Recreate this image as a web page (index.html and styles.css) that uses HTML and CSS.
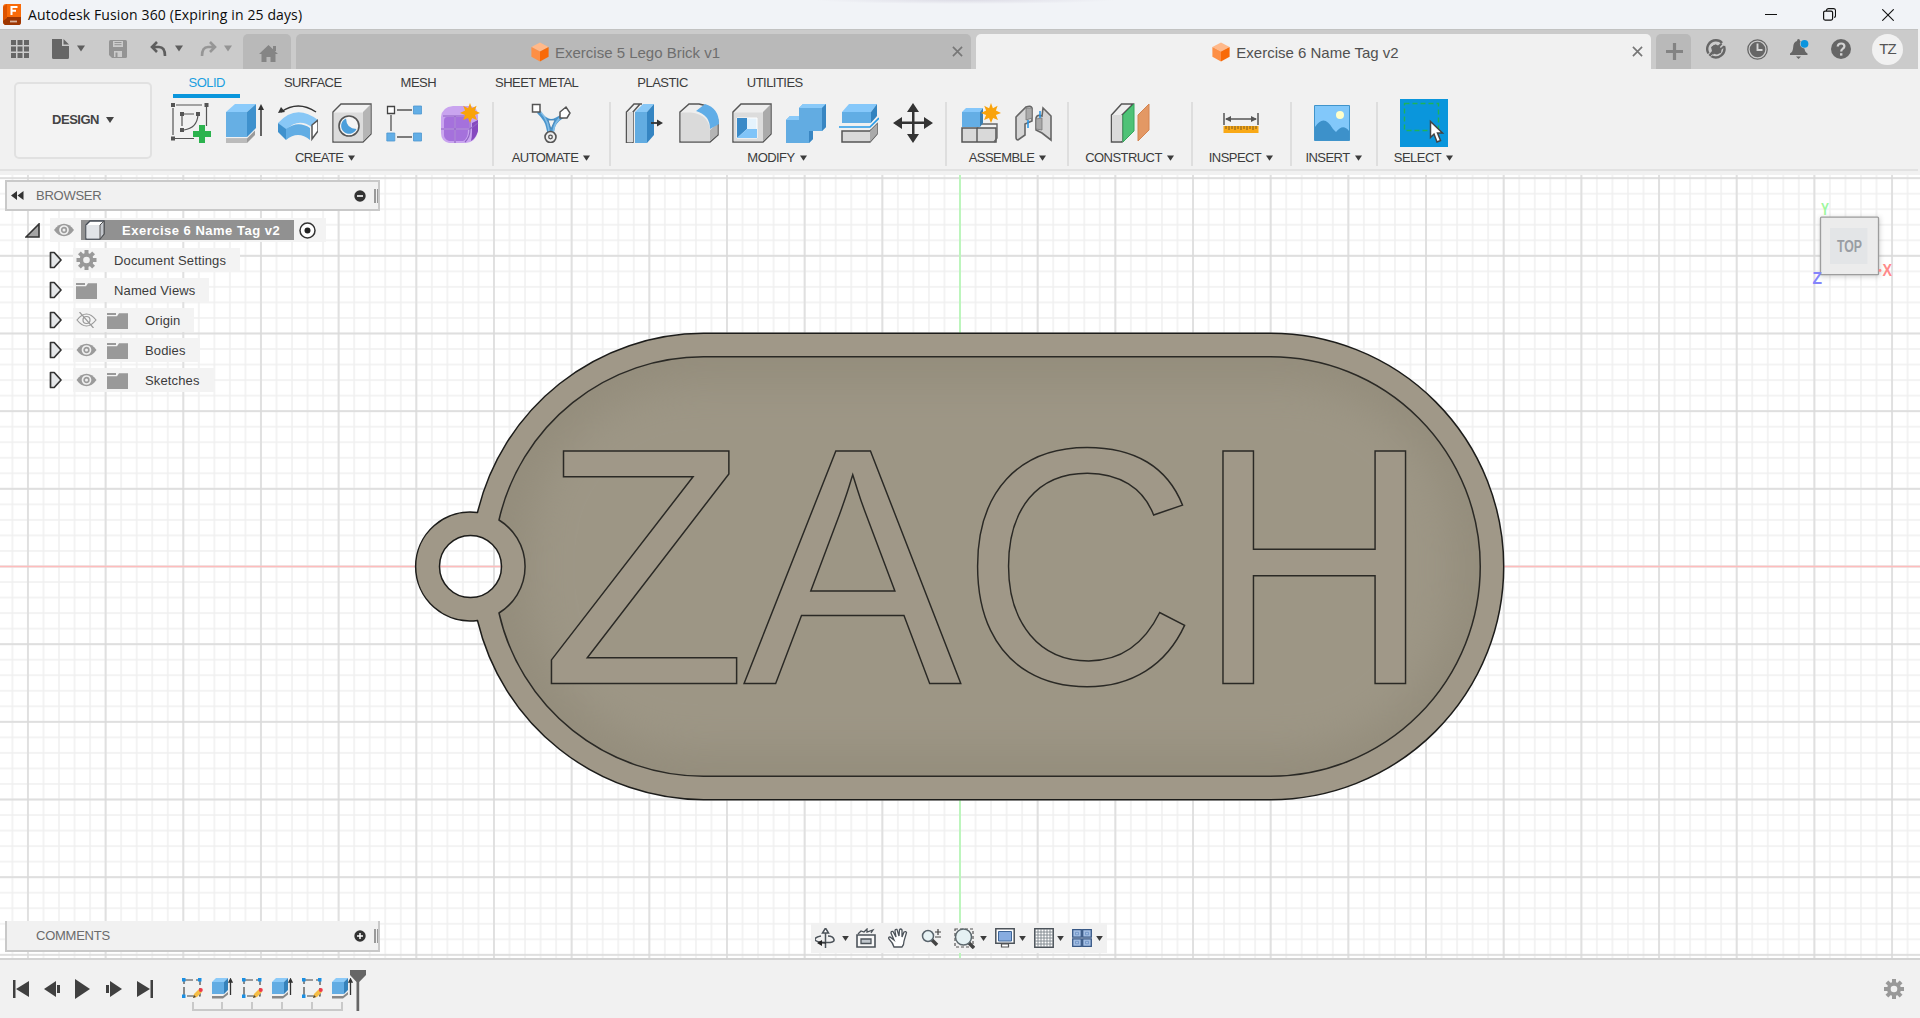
FILE: index.html
```html
<!DOCTYPE html>
<html lang="en">
<head>
<meta charset="utf-8">
<title>Autodesk Fusion 360</title>
<link rel="stylesheet" href="styles.css">
</head>
<body>
<svg class="defs" width="0" height="0" aria-hidden="true">
  <symbol id="caret" viewBox="0 0 8 6"><path d="M0 0h8L4 6z" fill="currentColor"/></symbol>
  <symbol id="cube-orange" viewBox="0 0 18 20"><path d="M9 .5l8.6 4.6L9 9.6.4 5.1z" fill="#ffb98a"/><path d="M.4 5.1L9 9.6v9.9L.4 14.8z" fill="#fd8f45"/><path d="M17.6 5.1L9 9.6v9.9l8.6-4.7z" fill="#f86a08"/></symbol>
  <symbol id="close" viewBox="0 0 12 12"><path d="M1 1l10 10M11 1L1 11" stroke="currentColor" stroke-width="1.8"/></symbol>
  <symbol id="star" viewBox="0 0 20 20"><path d="M10 0l1.9 5.2L16.6 2.8l-1.7 4.7L20 10l-5.1 2.1 2.1 4.9-4.9-2L10 20l-2-5-4.9 2 2-4.900L0 10l5.100-2.500L3.200 2.800 8.100 5.200z" fill="#f9a30b"/></symbol>
  <symbol id="eye" viewBox="0 0 20 14"><path d="M0 7Q4.500.8 10 .8T20 7q-4.500 6.200-10 6.200T0 7z" fill="#9b9b9b"/><circle cx="10" cy="7" r="4" fill="none" stroke="#efefef" stroke-width="1.700"/><circle cx="10" cy="7" r="1.500" fill="#efefef"/></symbol>
  <symbol id="folder" viewBox="0 0 21 17"><path d="M0 1h9v2H0z M0 4.300h10l2-3h9V17H0z" fill="#999"/></symbol>
  <symbol id="expander" viewBox="0 0 14 18"><path d="M1.500 1.500h3.700L12 9l-6.800 7.500H1.500z" fill="#e4e6e8" stroke="#333" stroke-width="1.700" stroke-linejoin="round"/></symbol>
  <symbol id="gear" viewBox="0 0 20 20"><g fill="#999"><circle cx="10" cy="10" r="7"/><path d="M8 0h4v20H8z"/><path d="M8 0h4v20H8z" transform="rotate(45 10 10)"/><path d="M8 0h4v20H8z" transform="rotate(90 10 10)"/><path d="M8 0h4v20H8z" transform="rotate(135 10 10)"/></g><circle cx="10" cy="10" r="3.300" fill="#f1f1f1"/></symbol>
  <symbol id="tl-sketch" viewBox="0 0 21 21"><path d="M2 2h16v16H2z" fill="none" stroke="#444" stroke-width="1.200" stroke-dasharray="9 3"/><g fill="#1a8fe3"><path d="M0 0h3.500v3.500H0zM16 0h3.500v3.500H16zM0 16.500h3.500V20H0z"/></g><path d="M11 20l1-4 5-5 3 3-5 5z" fill="#f6bd45"/><path d="M11 20l1-3 2 2z" fill="#444"/><circle cx="18.800" cy="12" r="2" fill="#ee3c48"/></symbol>
  <symbol id="tl-extrude" viewBox="0 0 21 21"><path d="M0 18h11l5-4v2.500l-5 4H0z" fill="#888"/><path d="M0 4l4-4h12l-4 4z" fill="#8ccaf8"/><path d="M0 4h12v12H0z" fill="#62ace3"/><path d="M12 4l4-4v12l-4 4z" fill="#3582bb"/><path d="M18.500 3v14M17 4l1.500-3L20 4z" stroke="#333" stroke-width="1.300" fill="#333"/></symbol>
</svg>

<header class="titlebar">
  <svg class="app-logo" width="18" height="21" viewBox="0 0 18 21"><path d="M3 0h15v18q0 2-2 3H2q-2-1-2-3V3q0-3 3-3z" fill="#f96a08"/><path d="M0 15l4-2h14v5q0 3-2 3H2q-2-1-2-3z" fill="#9d3602"/><path d="M0 3l4-3v14l-4 3z" fill="#dd5300"/><path d="M7.500 3h7M8.500 3v8M8 6.700h5" stroke="#fff" stroke-width="2" fill="none"/><path d="M7 17.500h7" stroke="#d9b29c" stroke-width="1.800"/></svg>
  <h1 class="app-title">Autodesk Fusion 360 (Expiring in 25 days)</h1>
  <div class="window-controls">
    <svg width="12" height="12" viewBox="0 0 12 12"><path d="M0 5.500h12" stroke="#111"/></svg>
    <svg width="13" height="13" viewBox="0 0 13 13"><path d="M3.500 3V2Q4 .6 5.500.6h5q2 0 2 2v5q0 1.500-1.300 2" fill="none" stroke="#111" stroke-width="1.100"/><rect x=".6" y="3.100" width="9" height="9" rx="1.500" fill="none" stroke="#111" stroke-width="1.200"/></svg>
    <svg width="12" height="12" viewBox="0 0 12 12"><path d="M.3.3l11.400 11.400M11.700.3L.3 11.700" stroke="#111" stroke-width="1.100"/></svg>
  </div>
</header>

<nav class="tabstrip">
  <div class="quick">
    <svg width="18" height="18" viewBox="0 0 18 18" fill="#666"><path d="M0 0h5v5H0zM6.500 0h5v5h-5zM13 0h5v5h-5zM0 6.500h5v5H0zM6.500 6.500h5v5h-5zM13 6.500h5v5h-5zM0 13h5v5H0zM6.500 13h5v5h-5zM13 13h5v5h-5z"/></svg>
    <svg width="17" height="20" viewBox="0 0 17 20" fill="#666"><path d="M0 0h10v7h7v11.500q0 1.500-1.500 1.500h-14Q0 20 0 18.500z"/><path d="M11.500 0L17 5.500h-5.500z"/></svg>
    <svg class="dark" width="8" height="7"><use href="#caret"/></svg>
    <svg width="18" height="18" viewBox="0 0 18 18"><path d="M1.500 0h15Q18 0 18 1.500v15q0 1.500-1.500 1.500H3l-3-3V1.500Q0 0 1.500 0z" fill="#949494"/><path d="M4 1h10v6H4zM5 11h8v6H5z" fill="#cbcbcb"/><path d="M5.500 2.500h7M5.500 4.700h7" stroke="#949494"/><path d="M6.500 12.500h2V17h-2z" fill="#949494"/></svg>
    <svg width="17" height="17" viewBox="0 0 17 17" fill="none" stroke="#5e5e5e" stroke-width="2.600"><path d="M7 1L2 6l5 5M2 6h7q6 0 6 9"/></svg>
    <svg class="dark" width="8" height="7"><use href="#caret"/></svg>
    <svg width="17" height="17" viewBox="0 0 17 17" fill="none" stroke="#969696" stroke-width="2.600"><path d="M10 1l5 5-5 5M15 6H8Q2 6 2 15"/></svg>
    <svg class="faded" width="8" height="7"><use href="#caret"/></svg>
  </div>
  <div class="home"><svg width="19" height="17" viewBox="0 0 19 17" fill="#858585"><path d="M9.500 0L19 9h-2.500v8h-5v-5h-4v5h-5V9H0z"/><path d="M14 1h3v5h-3z"/></svg></div>
  <div class="tab">
    <span class="tab-title"><svg width="18" height="20"><use href="#cube-orange"/></svg>Exercise 5 Lego Brick v1</span>
    <span class="tab-close"><svg width="11" height="11"><use href="#close"/></svg></span>
  </div>
  <div class="tab active">
    <span class="tab-title"><svg width="18" height="20"><use href="#cube-orange"/></svg>Exercise 6 Name Tag v2</span>
    <span class="tab-close"><svg width="11" height="11"><use href="#close"/></svg></span>
  </div>
  <div class="newtab"><svg width="17" height="17" viewBox="0 0 17 17"><path d="M8.500 0v17M0 8.500h17" stroke="#838383" stroke-width="3.200"/></svg></div>
  <div class="account">
    <svg width="20" height="20" viewBox="0 0 20 20"><path d="M2.500 14.500A8.700 8.700 0 0 1 10 1.300Q14 1.300 16 4" fill="none" stroke="#666" stroke-width="2.400"/><path d="M18 7A8.700 8.700 0 0 1 5 17" fill="none" stroke="#666" stroke-width="2.400"/><path d="M2.500 16l3.500-4-1-4 4-3 3 1.500L15 4l1.300 1.200L13.800 8l1 1 2.700-2.500 1.200 1.200-3.200 3-.5 3-4 1.800-3-.8-3 3.300z" fill="#666"/><path d="M5.500 7.500q1.500-2.500 4-2.500M7 15.500l-2.500 2" stroke="#cbcbcb" fill="none"/></svg>
    <svg width="21" height="21" viewBox="0 0 21 21"><circle cx="10.500" cy="10.500" r="9.700" fill="none" stroke="#666" stroke-width="1.300"/><circle cx="10.500" cy="10.500" r="7.800" fill="#666"/><path d="M10.500 4.500v6.500h5" fill="none" stroke="#d5d5d5" stroke-width="1.900"/></svg>
    <svg width="19" height="20" viewBox="0 0 19 20"><path d="M8.500 0q1.500 0 1.500 2 4 1 4.200 6 .3 5 3.300 6.500V16H0v-1.500Q3 13 3.200 8 3.400 3 7 2q0-2 1.500-2zM6 17.500h5l-2.500 2.500z" fill="#666"/><circle cx="14.500" cy="4.800" r="4.600" fill="#cbcbcb"/><circle cx="14.500" cy="4.800" r="3.900" fill="#0a94de"/></svg>
    <svg width="20" height="20" viewBox="0 0 20 20"><circle cx="10" cy="10" r="10" fill="#666"/><path d="M6.700 7.500Q7 4.500 10.200 4.500q3.200 0 3.200 2.800 0 1.500-1.700 2.500-1.500 1-1.500 2.800" fill="none" stroke="#d3d3d3" stroke-width="2.200"/><path d="M9 14.200h2.400v2.400H9z" fill="#d3d3d3"/></svg>
    <span class="avatar">TZ</span>
  </div>
</nav>

<section class="ribbon">
  <button class="workspace">DESIGN <svg width="8" height="6"><use href="#caret"/></svg></button>
  <div class="ribbon-main">
    <div class="ribbon-tabs"><span class="on">SOLID</span><span>SURFACE</span><span>MESH</span><span>SHEET METAL</span><span>PLASTIC</span><span>UTILITIES</span></div>
    <div class="groups">
      <div class="group create">
        <div class="icons">
          <svg viewBox="0 0 40 40"><path d="M5 2h26M35.500 4v19M2 5v27M4 35.500h19" fill="none" stroke="#555" stroke-width="1.200"/><path d="M13 11h10M11 13v10M13 27Q26 25 27 12" fill="none" stroke="#555" stroke-width="1.200"/><path d="M0 0h4v4H0zM33.500 0h4v4h-4zM0 33.500h4v4H0zM9 9h4v4H9zM25 9h4v4h-4zM9 25h4v4H9z" fill="#555"/><path d="M28 22h6v6h6v6h-6v6h-6v-6h-6v-6h6z" fill="#2cb34e"/></svg>
          <svg viewBox="0 0 40 40"><path d="M1 35.500h21l8-8V32l-8 8H1z" fill="#9a9a9a"/><path d="M1 35.500h21v4.500H1z" fill="#bbb"/><path d="M1 9l9-8h21l-9 8z" fill="#8bcbfb"/><path d="M1 9h21v25H1z" fill="#66afe4"/><path d="M22 9l9-8v24l-9 9z" fill="#3f91cd"/><path d="M36 33V5" stroke="#333" stroke-width="1.500"/><path d="M33 7l3-6 3 6z" fill="#333"/></svg>
          <svg viewBox="0 0 40 40"><path d="M3 9Q20-3 38 9" fill="none" stroke="#333" stroke-width="1.500"/><path d="M0 10l3-6 4 5z" fill="#333"/><path d="M0 20Q18 0 40 17l-6 7Q20 14 8 27z" fill="#88c7f6"/><path d="M0 20l8 6v11l-8-8z" fill="#3f91cd"/><path d="M8 26q12-9 24-1v12Q20 27 8 37z" fill="#62ade4"/><path d="M34 22l6-5v11l-6 8z" fill="#fff" stroke="#555" stroke-width="1.500"/></svg>
          <svg viewBox="0 0 40 40"><path d="M1 9l8-8h30v30l-8 8H1z" fill="#f2f2f2" stroke="#555" stroke-width="1.400"/><path d="M1.700 9.500H31v28.800H1.700z" fill="#dcdcdc"/><path d="M31 9l7.500-7.500v29.300L31 38z" fill="#b5b5b5"/><circle cx="17" cy="23" r="10" fill="#f5f5f5" stroke="#555" stroke-width="1.600"/><path d="M14 15.500a8 8 0 1 0 10.500 10.500q-10 0-10.500-10.500z" fill="#4c9fdb"/></svg>
          <svg viewBox="0 0 40 40"><path d="M11 7h15M5 12v16M11 34h15" fill="none" stroke="#555" stroke-width="1.300"/><path d="M1.500 3.500h7v7h-7z" fill="#fff" stroke="#444" stroke-width="1.300"/><g fill="#62aee6" stroke="#4f98d0" stroke-width=".8"><path d="M27.500 3h8v8h-8zM.8 30h8v8h-8zM27.500 30h8v8h-8z"/></g></svg>
          <svg viewBox="0 0 40 40"><path d="M1 14Q2 4 13 3h17q8 1 8 10v15q-2 11-12 12H9q-8-2-8-10z" fill="#c9a4ef"/><path d="M7 14h7v11H4v-7q0-4 3-4zM16 14h9q4 0 4 4v7H16zM4 27h10v11H9q-5-2-5-6zM16 27h12q0 9-5 11h-7z" fill="#a571dc"/><path d="M32 20l6-3v11q-2 7-7 10 1-4 1-9z" fill="#8549bf"/><path d="M1 26h29l8-6M15 13v27M3 13h22q5 1 5 6v8q0 7-5 12" fill="none" stroke="#8f62c4" stroke-width="1.100"/><use href="#star" x="20" y="0" width="20" height="20"/></svg>
        </div>
        <div class="label">CREATE <svg width="7" height="6"><use href="#caret"/></svg></div>
      </div>
      <div class="group automate">
        <div class="icons"><svg viewBox="0 0 40 40"><path d="M8 8q8 8 12 8t12-6l3 4q-8 3-11 10l-2 9h-5l-2-9q-1-6-9-14z" fill="#4b96cd"/><path d="M17 17h7l-4 9z" fill="#f1f1f1" stroke="#3b7eb3" stroke-width=".8"/><path d="M9 8q10 11 9 25M33 12q-11 6-11 21" fill="none" stroke="#82bce6" stroke-width="1.600"/><path d="M1.500 1.500H9V9H1.500zM29 9l6-5 4 6-3 5h-7z" fill="#fff" stroke="#555" stroke-width="1.500"/><circle cx="19.500" cy="34" r="5.500" fill="#eee" stroke="#555" stroke-width="1.600"/><circle cx="19.500" cy="34" r="1.800" fill="none" stroke="#555" stroke-width="1.300"/></svg></div>
        <div class="label">AUTOMATE <svg width="7" height="6"><use href="#caret"/></svg></div>
      </div>
      <div class="group modify">
        <div class="icons">
          <svg viewBox="0 0 40 40"><path d="M8 40H1.500V9L9 1h8M8 40V9l7-8" fill="#f0f0f0" stroke="#555" stroke-width="1.500"/><path d="M2 9h6v30H2z" fill="#dadada"/><path d="M10 9l8-8h11l-7 8z" fill="#88c8f7"/><path d="M10 9h12v31H10z" fill="#62ace1"/><path d="M22 9l7-8v31l-7 8z" fill="#3585c2"/><path d="M26 20h9" stroke="#333" stroke-width="1.800"/><path d="M32 16.500l6 3.500-6 3.500z" fill="#333"/></svg>
          <svg viewBox="0 0 40 40"><path d="M1 9l9-8h10Q38 4 39 20v12l-8 7H1z" fill="#eee" stroke="#555" stroke-width="1.500"/><path d="M1.700 9.500H12q18 2 19 18v10.800H1.700z" fill="#dadada"/><path d="M31 27l7.500-6.500v11L31 38z" fill="#b4b4b4"/><path d="M17 8l9-7q14 4 14 20l-9 5Q31 12 17 8z" fill="#60ade7"/></svg>
          <svg viewBox="0 0 40 40"><path d="M1 9l8-8h30v30l-8 8H1z" fill="#eee" stroke="#555" stroke-width="1.500"/><path d="M1.700 9.500H31v28.800H1.700z" fill="#dcdcdc"/><path d="M31 9l7.500-7.500v29.300L31 38z" fill="#aaa"/><path d="M5 15h20v20H5z" fill="#e5f3fd" stroke="#fff"/><path d="M5 15h10v11L5 35z" fill="#3a8ac8"/><path d="M15 26h10v9H5z" fill="#80c4f8"/></svg>
          <svg viewBox="0 0 40 40"><path d="M0 17l4-4h9V5l4-4h23v23l-4 4h-9v8l-4 4H0z" fill="#62ace2"/><path d="M13 5l4-4h23l-4 4zM0 17l4-4h9v4z" fill="#8acaf9"/><path d="M36 5l4-4v23l-4 4zM23 28h4v8l-4 4z" fill="#3986c2"/></svg>
          <svg viewBox="0 0 40 40"><path d="M3 28h28l7-7v10l-7 8H3z" fill="#d9d9d9" stroke="#555" stroke-width="1.500"/><path d="M31 28l7-7v10l-7 8z" fill="#aaa"/><path d="M3 9l7-8h28l-6 8z" fill="#86c8fa"/><path d="M3 9h29v11H3z" fill="#61ade4"/><path d="M32 9l6-8v12l-6 7z" fill="#3383bf"/><path d="M0 24h31l9-9" fill="none" stroke="#f1f1f1" stroke-width="4"/><path d="M0 24h31l9-9" fill="none" stroke="#289be7" stroke-width="1.700"/></svg>
          <svg viewBox="0 0 40 40" fill="#333"><path d="M19 8h2.500v10.500H33V21H21.500v11H19V21H8v-2.500h11z"/><path d="M20 0l6 9H14zM20 40l6-9H14zM0 20l9-6v12zM40 20l-9-6v12z"/></svg>
        </div>
        <div class="label">MODIFY <svg width="7" height="6"><use href="#caret"/></svg></div>
      </div>
      <div class="group assemble">
        <div class="icons">
          <svg viewBox="0 0 40 40"><path d="M1 25h34v14H1z" fill="#d9d9d9" stroke="#555" stroke-width="1.500"/><path d="M16 25l4-4h16v14l-3 4" fill="none" stroke="#666" stroke-width="1.400"/><path d="M16 25v14" stroke="#555" stroke-width="1.400"/><path d="M1 9l4-4h17l-3 4z" fill="#85c7fa"/><path d="M1 9h18v15H1z" fill="#64aee5"/><path d="M19 9l3-4v15l-3 4z" fill="#397fb3"/><use href="#star" x="20" y="0" width="20" height="20"/></svg>
          <svg viewBox="0 0 40 40"><path d="M2 14l10-10q5-2 6 1v13l-7 3v11l-7 5q-2 0-2-3zM37 13L29 5l-1 8q-5-2-6 2v12l6 3 9 7z" fill="#d5d5d5" stroke="#666" stroke-width="1.600"/><path d="M12 5v12l6-2V5zM22 16v10l6 1V15z" fill="#aaa" stroke="#777" stroke-width=".8"/><path d="M14 17v8M26 8v7" stroke="#2294e8" stroke-width="1.500"/></svg>
        </div>
        <div class="label">ASSEMBLE <svg width="7" height="6"><use href="#caret"/></svg></div>
      </div>
      <div class="group construct">
        <div class="icons"><svg viewBox="0 0 40 40"><path d="M1.500 12l10-11H23L12 12v27H1.500z" fill="#eee" stroke="#555" stroke-width="1.500"/><path d="M2 12h10v26H2z" fill="#dadada"/><path d="M13 12L24 1v27L13 39z" fill="#4fc277" stroke="#35a85c"/><path d="M28 12L39 1v26L28 38z" fill="#e39864" stroke="#d48450"/></svg></div>
        <div class="label">CONSTRUCT <svg width="7" height="6"><use href="#caret"/></svg></div>
      </div>
      <div class="group inspect">
        <div class="icons"><svg viewBox="0 0 40 40"><path d="M3 10v12M37 10v12M5 16h30" stroke="#555" stroke-width="1.500"/><path d="M4 16l6-3v6zM36 16l-6-3v6z" fill="#555"/><path d="M2.500 23h35v7h-35z" fill="#f9a916"/><path d="M5 23v3M8 23v4M11 23v3M14 23v4M17 23v3M20 23v4M23 23v3M26 23v4M29 23v3M32 23v4M35 23v3" stroke="#7d5b1f"/></svg></div>
        <div class="label">INSPECT <svg width="7" height="6"><use href="#caret"/></svg></div>
      </div>
      <div class="group insert">
        <div class="icons"><svg viewBox="0 0 40 40"><path d="M2.500 2.500h35v35h-35z" fill="#82c8fa" stroke="#4094cb"/><path d="M3 24q9-14 18 2l3 3q7-9 13-1v9H3z" fill="#3d91ca"/><circle cx="28" cy="12" r="4" fill="#ffffc9"/></svg></div>
        <div class="label">INSERT <svg width="7" height="6"><use href="#caret"/></svg></div>
      </div>
      <div class="group select">
        <div class="icons"><svg viewBox="0 0 48 48"><path d="M0 0h48v48H0z" fill="#0a96dc"/><path d="M4.500 4.500h34v27h-34z" fill="none" stroke="#1eb25a" stroke-width="1.400" stroke-dasharray="5 3"/><path d="M30.500 22.500v16l3.500-3.500 3 8 3.500-1.500-3-7.500h5z" fill="#fff" stroke="#444" stroke-width="1.500"/></svg></div>
        <div class="label">SELECT <svg width="7" height="6"><use href="#caret"/></svg></div>
      </div>
    </div>
  </div>
</section>

<main class="canvas">
  <svg class="scene" viewBox="0 175 1920 783" width="1920" height="783">
    <defs>
      <pattern id="minor" x="952.230" y="558.730" width="15.534" height="15.534" patternUnits="userSpaceOnUse"><path d="M7.767 0v15.540M0 7.767h15.540" stroke="#efefef" stroke-width="1.400"/></pattern>
      <pattern id="major" x="921.165" y="527.665" width="77.670" height="77.670" patternUnits="userSpaceOnUse"><path d="M38.835 0v77.700M0 38.835h77.700" stroke="#d9d9d9" stroke-width="1.400"/></pattern>
      <clipPath id="pocket"><path d="M703.500 356.750H1270.500A209.750 209.750 0 0 1 1270.500 776.250H703.500A209.750 209.750 0 0 1 499 613A54.500 54.500 0 0 0 499 520A209.750 209.750 0 0 1 703.500 356.750Z"/></clipPath>
      <filter id="soft" x="-20%" y="-20%" width="140%" height="140%"><feGaussianBlur stdDeviation="20"/></filter>
      <filter id="halo" x="-20%" y="-20%" width="140%" height="140%"><feGaussianBlur stdDeviation="2.500"/></filter>
    </defs>
    <rect x="0" y="175" width="1920" height="783" fill="#fff"/>
    <rect x="0" y="175" width="1920" height="783" fill="url(#minor)"/>
    <rect x="0" y="175" width="1920" height="783" fill="url(#major)"/>
    <path d="M0 566.500H1920" stroke="#ffbcbc" stroke-width="1.600"/>
    <path d="M960 175V958" stroke="#b9f8b9" stroke-width="1.800"/>
    <path d="M703.500 333.300H1270.500A233.200 233.200 0 0 1 1270.500 799.700H703.500A233.200 233.200 0 0 1 477.500 620.500A54.500 54.500 0 1 1 477.500 512.500A233.200 233.200 0 0 1 703.500 333.300ZM501.500 566.500a31 31 0 1 0-62 0a31 31 0 1 0 62 0Z" fill="#a09888" fill-rule="evenodd" stroke="#1c1c1a" stroke-width="1.500"/>
    <g clip-path="url(#pocket)">
      <rect x="480" y="350" width="1020" height="440" fill="#948d7c"/>
      <rect x="530" y="384" width="922" height="366" rx="165" fill="#9d9685" filter="url(#soft)"/>
    </g>
    <path d="M703.500 356.750H1270.500A209.750 209.750 0 0 1 1270.500 776.250H703.500A209.750 209.750 0 0 1 499 613A54.500 54.500 0 0 0 499 520A209.750 209.750 0 0 1 703.500 356.750Z" fill="none" stroke="#2a2925" stroke-width="1.500"/>
    <text class="engraving" transform="scale(.967 1)" y="683.500"><tspan x="559.200" textLength="213.500" lengthAdjust="spacingAndGlyphs">Z</tspan><tspan x="768.800 993.800 1237">ACH</tspan></text>
  </svg>

  <aside class="browser">
    <div class="panel-head">
      <svg width="13" height="9" viewBox="0 0 13 9"><path d="M6 0v9L0 4.500zM12.500 0v9l-6-4.500z" fill="#333"/></svg>
      <span class="panel-title">BROWSER</span>
      <svg width="12" height="12" viewBox="0 0 12 12"><circle cx="6" cy="6" r="5.700" fill="#333"/><path d="M3 6h6" stroke="#fff" stroke-width="1.600"/></svg>
      <i class="grip"></i>
    </div>
    <div class="row root">
      <svg width="15" height="15" viewBox="0 0 15 15"><path d="M1 14L14 1v13z" fill="#a5a5a5" stroke="#333" stroke-width="1.600"/></svg>
      <div class="cell">
        <svg width="20" height="14"><use href="#eye"/></svg>
        <span class="selected"><svg width="20" height="20" viewBox="0 0 20 20"><path d="M1 5l4-4h14v13l-4 5H1z" fill="#fff" stroke="#444b55" stroke-width="1.300"/><path d="M1.500 5H15v13.500H1.500z" fill="#e1e4e8"/><path d="M15 5l4-4v13l-4 5z" fill="#c2c6cc" stroke="#555"/></svg><b>Exercise 6 Name Tag v2</b></span>
        <svg width="17" height="17" viewBox="0 0 17 17"><circle cx="8.500" cy="8.500" r="7.500" fill="#fff" stroke="#333" stroke-width="1.500"/><circle cx="8.500" cy="8.500" r="3" fill="#222"/></svg>
      </div>
    </div>
    <div class="row"><svg width="14" height="18"><use href="#expander"/></svg><div class="cell"><svg width="21" height="20"><use href="#gear"/></svg><span class="name">Document Settings</span></div></div>
    <div class="row"><svg width="14" height="18"><use href="#expander"/></svg><div class="cell"><svg width="21" height="17"><use href="#folder"/></svg><span class="name">Named Views</span></div></div>
    <div class="row"><svg width="14" height="18"><use href="#expander"/></svg><div class="cell"><svg width="21" height="16" viewBox="0 0 20 16" fill="none" stroke="#999" stroke-width="1.200"><path d="M.5 8Q10-4 19.500 8 10 20 .5 8zM3 0l14 16"/><circle cx="10" cy="8" r="3.500"/></svg><svg class="fold" width="21" height="17"><use href="#folder"/></svg><span class="name">Origin</span></div></div>
    <div class="row"><svg width="14" height="18"><use href="#expander"/></svg><div class="cell"><svg width="21" height="14"><use href="#eye"/></svg><svg class="fold" width="21" height="17"><use href="#folder"/></svg><span class="name">Bodies</span></div></div>
    <div class="row"><svg width="14" height="18"><use href="#expander"/></svg><div class="cell"><svg width="21" height="14"><use href="#eye"/></svg><svg class="fold" width="21" height="17"><use href="#folder"/></svg><span class="name">Sketches</span></div></div>
  </aside>

  <svg class="viewcube" width="100" height="100" viewBox="1800 190 100 100">
    <rect x="1820" y="217" width="60" height="60" fill="#777" opacity=".3" filter="url(#halo)"/>
    <rect x="1820.500" y="217.200" width="58" height="57.500" rx="1" fill="#ececec" stroke="#9d9d9d" stroke-width="1.300"/>
    <rect x="1830" y="228" width="37.500" height="36" fill="#e3e5e7"/>
    <text class="cube-label" x="1837" y="251.500" textLength="25" lengthAdjust="spacingAndGlyphs">TOP</text>
    <text class="axis y" x="1821" y="214.500" textLength="8" lengthAdjust="spacingAndGlyphs">Y</text>
    <text class="axis x" x="1882.500" y="276" textLength="9.500" lengthAdjust="spacingAndGlyphs">X</text>
    <text class="axis z" x="1812.500" y="283.500" textLength="9.500" lengthAdjust="spacingAndGlyphs">Z</text>
    <circle cx="1880" cy="270.500" r="1.400" fill="#ff8888"/>
  </svg>

  <div class="comments panel-head">
    <span class="panel-title">COMMENTS</span>
    <svg width="12" height="12" viewBox="0 0 12 12"><circle cx="6" cy="6" r="5.700" fill="#333"/><path d="M3 6h6M6 3v6" stroke="#fff" stroke-width="1.500"/></svg>
    <i class="grip"></i>
  </div>

  <div class="navbar">
    <svg width="20" height="20" viewBox="0 0 20 20"><path d="M6 8q-6 1-6 3.500T10 14.500t9-3T13 8" fill="none" stroke="#4c535a" stroke-width="1.500"/><path d="M10.500 5v15M10.500 0l-3 5h6z" fill="#fff" stroke="#4c535a" stroke-width="1.500"/><path d="M2 15l5-3v6zM6 14.500h5v1H6z" fill="#222"/></svg>
    <svg width="7" height="5"><use href="#caret"/></svg>
    <svg width="20" height="20" viewBox="0 0 20 20"><path d="M1 7h18v12H1z" fill="#f8f8f8" stroke="#4c535a" stroke-width="1.600"/><path d="M5 11h10v4.500H5z" fill="#c2c8ce" stroke="#4c535a" stroke-width="1.300"/><path d="M2 6l3-3 3 1 3-3v3l6-2-2 3" fill="none" stroke="#4c535a" stroke-width="1.300"/></svg>
    <svg width="20" height="20" viewBox="0 0 20 20"><path d="M6 19Q5 15 1 11q-1-2 1-2l4 3-3-7q0-2 2-1.500L8 9 7 3q0-2 2-1.500L11 8l.5-6q1-2 2.500 0v7l2-5q2-1 2.500.5L16 13q0 4-2 6z" fill="#fff" stroke="#4c535a" stroke-width="1.300"/></svg>
    <svg width="21" height="20" viewBox="0 0 21 20"><path d="M10 11l6 6" stroke="#444" stroke-width="3.500"/><circle cx="7" cy="8" r="5.500" fill="#e7f2f4" stroke="#59646c" stroke-width="1.500"/><path d="M14 4h6M17 1v6M14 9h6" stroke="#444" stroke-width="1.200"/></svg>
    <svg class="zoom-window" width="21" height="21" viewBox="0 0 21 21"><path d="M1 1h18v18H1z" fill="none" stroke="#555" stroke-width="1.200" stroke-dasharray="3 2"/><path d="M14 14l6 6" stroke="#444" stroke-width="3.500"/><circle cx="9.500" cy="9" r="8" fill="#e5f1f3" stroke="#5d686d" stroke-width="1.500"/></svg>
    <svg width="7" height="5"><use href="#caret"/></svg>
    <svg class="display" width="20" height="20" viewBox="0 0 20 20"><path d="M.8.8h18.400v14.500H.8z" fill="#fff" stroke="#4c535a" stroke-width="1.500"/><path d="M3.500 3.500h13v9.500h-13z" fill="#87ace0" stroke="#3f6698"/><path d="M6.500 16h7v3h-7z" fill="#fff" stroke="#555" stroke-width="1.200"/></svg>
    <svg width="7" height="5"><use href="#caret"/></svg>
    <svg class="gridset" width="20" height="20" viewBox="0 0 20 20"><path d="M.8.800h18.400v18.400H.8z" fill="#fff" stroke="#4c535a" stroke-width="1.500"/><path d="M4 1v18M7 1v18M10 1v18M13 1v18M16 1v18M1 4h18M1 7h18M1 10h18M1 13h18M1 16h18" stroke="#7c838a" stroke-width=".9"/></svg>
    <svg width="7" height="5"><use href="#caret"/></svg>
    <svg class="viewports" width="20" height="18" viewBox="0 0 20 18" fill="#a4bfe4" stroke="#385886" stroke-width="1.300"><path d="M.7.700h8.600v7.500H.7zM10.700.700h8.600v7.500h-8.600zM.7 9.800h8.600v7.500H.7zM10.700 9.800h8.600v7.500h-8.600z"/><path d="M3.500 3.300h3v2.500h-3zM13.500 3.300h3v2.500h-3zM3.500 12.300h3v2.500h-3zM13.500 12.300h3v2.500h-3z" stroke="#6b90c4" stroke-width=".8"/></svg>
    <svg width="7" height="5"><use href="#caret"/></svg>
  </div>
</main>

<footer class="timeline">
  <div class="transport">
    <svg width="16" height="18" viewBox="0 0 16 18" fill="#404040"><path d="M0 0h2.500v18H0zM16 1v16L3 9z"/></svg>
    <svg width="16" height="18" viewBox="0 0 16 18" fill="#404040"><path d="M12 1v16L0 9zM13 5h3v8h-3z"/></svg>
    <svg width="16" height="20" viewBox="0 0 16 20" fill="#404040"><path d="M0 0l15 10L0 20z"/></svg>
    <svg width="16" height="18" viewBox="0 0 16 18" fill="#404040"><path d="M4 1v16l12-8zM0 5h3v8H0z"/></svg>
    <svg width="16" height="18" viewBox="0 0 16 18" fill="#404040"><path d="M13.500 0H16v18h-2.500zM0 1v16l13-8z"/></svg>
  </div>
  <div class="history">
    <div class="features">
      <svg width="21" height="21"><use href="#tl-sketch"/></svg><svg width="21" height="21"><use href="#tl-extrude"/></svg><svg width="21" height="21"><use href="#tl-sketch"/></svg><svg width="21" height="21"><use href="#tl-extrude"/></svg><svg width="21" height="21"><use href="#tl-sketch"/></svg><svg width="21" height="21"><use href="#tl-extrude"/></svg>
    </div>
    <svg class="bracket" width="151" height="9" viewBox="0 0 151 9"><path d="M1 0v8h149V0M30 0v8M60 0v8M90 0v8M120 0v8" fill="none" stroke="#c9c9c9" stroke-width="2"/></svg>
  </div>
  <svg class="marker" width="16" height="41" viewBox="0 0 16 41"><path d="M0 0h16v5L9.200 12v29H6.500V12L0 5z" fill="#666"/></svg>
  <svg class="settings" width="20" height="20"><use href="#gear"/></svg>
</footer>
</body>
</html>
```
FILE: styles.css
```css
* { box-sizing: border-box; }
body { margin: 0; width: 1920px; height: 1018px; overflow: hidden; display: flex; flex-direction: column; background: #f1f1f1; color: #3c3c3c; font: 13px "Liberation Sans", Arial, sans-serif; }
svg { display: block; flex: none; }
.defs { position: absolute; }

.titlebar { height: 29px; flex: none; display: flex; align-items: center; padding: 0 26px 0 3px; background: radial-gradient(ellipse 150px 4px at 965px 0, #dddce6, transparent), #f1f3f7; }
.app-logo { margin-top: -1px; }
.app-title { margin: 0 0 0 7px; font: 400 14px/28px "Open Sans", "Noto Sans", sans-serif; letter-spacing: .12px; color: #0c0c0c; }
.window-controls { margin-left: auto; display: flex; align-items: center; gap: 46px; }

.tabstrip { height: 40px; flex: none; width: 1917.500px; background: #cbcbcb; display: flex; align-items: flex-end; border-top: 1px solid #c2c2c2; }
.quick { width: 243px; height: 40px; display: grid; grid-template-columns: 41px 25px 32px 41px 25px 25px 24px 8px; align-items: center; padding-left: 11px; }
.dark { color: #5e5e5e; margin-top: -2px; }
.faded { color: #949494; margin-top: -2px; }
.home { width: 48px; height: 35px; background: #b9b9b9; border-radius: 5px 5px 0 0; display: flex; align-items: center; justify-content: center; padding: 4px 0 0 3px; margin-right: 5px; }
.tab { width: 675px; height: 35px; background: #b9b9b9; border-radius: 5px 5px 0 0; display: flex; align-items: center; margin-right: 5px; font-size: 15px; color: #6e6e6e; }
.tab.active { background: #f1f1f1; color: #505050; }
.tab-title { flex: 1; display: flex; align-items: center; justify-content: center; gap: 6px; padding: 1px 0 0 11px; }
.tab-close { width: 27px; display: flex; justify-content: center; color: #777; }
.newtab { width: 35px; height: 35px; background: #b9b9b9; border-radius: 5px 5px 0 0; display: flex; align-items: center; justify-content: center; padding-left: 1px; }
.account { margin-left: 15px; height: 40px; display: grid; grid-template-columns: 41px 43px 41px 42px 32px; align-items: center; justify-items: start; }
.avatar { width: 31px; height: 31px; border-radius: 50%; background: #f1f1f1; text-align: center; line-height: 30px; font-size: 15px; letter-spacing: -.8px; color: #555; margin-left: -1px; }

.ribbon { height: 102px; flex: none; width: 1917.500px; display: flex; border-bottom: 2px solid #e2e2e2; letter-spacing: -.55px; }
.workspace { width: 138px; height: 77px; margin: 13px 0 0 14px; border: 2px solid #e1e1e1; border-radius: 5px; background: #f3f3f3; font: bold 13px "Liberation Sans", Arial, sans-serif; color: #444; letter-spacing: -.5px; display: flex; align-items: center; justify-content: center; gap: 7px; padding: 0 0 2px; }
.ribbon-main { flex: 1; }
.ribbon-tabs { display: flex; gap: 28px; height: 29px; margin-left: 21px; line-height: 28px; letter-spacing: -.53px; }
.ribbon-tabs span { padding: 0 15.500px; white-space: nowrap; }
.ribbon-tabs .on { color: #1a9fe0; border-bottom: 4px solid #0a96dc; }
.groups { display: flex; margin-left: 12px; }
.group { height: 64px; margin-top: 4px; border-right: 2px solid #dedede; }
.icons { display: flex; justify-content: space-around; height: 48px; margin-top: -3px; align-items: center; }
.icons svg { width: 40px; height: 40px; }
.label { display: flex; align-items: center; justify-content: center; gap: 5px; line-height: 21px; }
.create { width: 329.500px; padding-right: 5px; }
.automate { width: 117px; }
.modify { width: 336px; padding: 0 5px 0 8px; }
.modify .label { margin-left: -4px; }
.assemble { width: 122px; padding: 0 6px 0 8px; }
.construct { width: 124px; }
.inspect { width: 99px; }
.insert { width: 86px; }
.insert .icons { margin-right: 3px; }
.select { width: 92px; border: 0; }
.select .icons svg { width: 48px; height: 48px; }

.canvas { position: relative; flex: none; height: 783px; margin-top: 4px; overflow: hidden; }
.engraving { font-family: "Liberation Sans", Arial, sans-serif; font-size: 338px; fill: #a09888; stroke: #2a2925; stroke-width: 1.500px; }
.browser { position: absolute; left: 5px; top: 5px; width: 375px; }
.panel-head { display: flex; align-items: center; height: 31px; border: 2px solid #c9c9c9; background: #f1f1f1; padding: 0 0 0 4px; color: #6b6b6b; }
.panel-title { flex: 1; margin-left: 12px; letter-spacing: -.25px; }
.grip { width: 4px; height: 14px; margin-left: 8px; border: solid #999; border-width: 0 1px 0 2px; }
.row { display: flex; align-items: center; height: 24px; margin: 0 0 6px 44px; }
.row.root { margin: 7px 0 6px 20px; }
.cell { height: 24px; background: #f3f3f3; display: flex; align-items: center; padding: 0 14px 0 3px; margin-left: 10px; }
.root .cell { padding: 0 10px 0 4px; }
.selected { display: flex; align-items: center; height: 20px; width: 213px; background: #919191; color: #fff; margin: 0 5px 0 7px; padding-left: 4px; white-space: nowrap; }
.selected b { margin-left: 17px; letter-spacing: .5px; }
.fold { margin-left: 10px; }
.name { margin-left: 17px; letter-spacing: .13px; white-space: nowrap; }
.viewcube { position: absolute; left: 1800px; top: 15px; }
.cube-label { font: bold 16px "Liberation Sans", Arial, sans-serif; fill: #999da3; }
.axis { font: bold 17px "Liberation Sans", Arial, sans-serif; }
.axis.x { fill: #ff8a8a; }
.axis.y { fill: #9df79d; }
.axis.z { fill: #8484fb; }
.comments { position: absolute; left: 5px; top: 746px; width: 375px; border-top: 0; padding-left: 17px; }
.navbar { position: absolute; left: 811px; top: 748px; width: 296px; height: 30px; background: #f1f1f1; display: grid; grid-template-columns: 28px 12px 30px 34px 32px 31px 11px 27px 12px 28px 8px 32px 6px; align-items: center; justify-items: center; }
.zoom-window { margin-left: 3px; }
.display { margin-left: 5px; }
.gridset { margin-left: 4px; }
.viewports { margin-left: 4px; }

.timeline { flex: 1; border-top: 2px solid #d3d3d3; background: #f1f1f1; display: flex; align-items: flex-start; }
.transport { display: flex; gap: 15px; align-items: center; width: 142px; margin: 19px 0 0 13px; }
.history { width: 180px; margin: 18px 0 0 27px; }
.features { display: flex; gap: 9px; }
.bracket { margin: 3px 0 0 10px; }
.marker { margin: 10px 0 0 -12px; }
.settings { margin: 19px 16px 0 auto; }
```
